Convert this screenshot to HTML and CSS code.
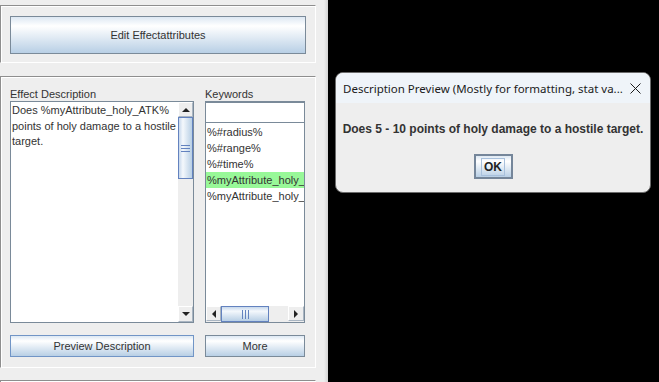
FILE: index.html
```html
<!DOCTYPE html>
<html lang="en">
<head>
  <meta charset="UTF-8">
  <meta name="viewport" content="width=device-width, initial-scale=1.0">
  <title>Effect Editor</title>
  <link rel="stylesheet" href="styles.css">
</head>
<body>
  <div class="app">
    <div class="panel panel-top">
      <button class="btn btn-wide">Edit Effectattributes</button>
    </div>

    <div class="panel panel-main">
      <div class="col col-desc">
        <div class="label">Effect Description</div>
        <div class="scroll-box desc-box">
          <div class="desc-text">Does %myAttribute_holy_ATK% points of holy damage to a hostile target.</div>
          <div class="vbar">
            <div class="arrow-btn"><span class="tri tri-up"></span></div>
            <div class="vthumb"><span class="grip-v"></span></div>
            <div class="track"></div>
            <div class="arrow-btn"><span class="tri tri-down"></span></div>
          </div>
        </div>
        <button class="btn btn-focus">Preview Description</button>
      </div>

      <div class="col col-keys">
        <div class="label">Keywords</div>
        <div class="scroll-box keys-box">
          <div class="search"></div>
          <ul class="key-list">
            <li>%#radius%</li>
            <li>%#range%</li>
            <li>%#time%</li>
            <li class="selected">%myAttribute_holy_</li>
            <li>%myAttribute_holy_</li>
          </ul>
          <div class="hbar">
            <div class="arrow-btn"><span class="tri tri-left"></span></div>
            <div class="hthumb"><span class="grip-h"></span></div>
            <div class="track"></div>
            <div class="arrow-btn"><span class="tri tri-right"></span></div>
          </div>
        </div>
        <button class="btn">More</button>
      </div>
    </div>

    <div class="panel panel-next"></div>
  </div>

  <div class="desktop">
    <div class="dialog">
      <div class="dialog-title">
        <span>Description Preview (Mostly for formatting, stat va...</span>
        <svg class="close" width="11" height="11" viewBox="0 0 11 11">
          <path d="M0.5 0.5 L10.5 10.5 M10.5 0.5 L0.5 10.5" stroke="#1b1b1b" stroke-width="1" fill="none"/>
        </svg>
      </div>
      <div class="dialog-body">
        <p>Does 5 - 10 points of holy damage to a hostile target.</p>
        <button class="ok"><span>OK</span></button>
      </div>
    </div>
  </div>
</body>
</html>
```

FILE: styles.css
```css
body {
  margin: 0;
  height: 382px;
  display: flex;
  overflow: hidden;
  background: #000;
  font-family: "Liberation Sans", Arial, sans-serif;
  font-size: 11px;
  color: #333;
}

.app {
  width: 328px;
  height: 382px;
  flex: none;
  padding-top: 5px;
  box-sizing: border-box;
  overflow: hidden;
  background: linear-gradient(to right, #eeeeee 324px, #d4d4d4 328px);
}

.panel {
  width: 316px;
  box-sizing: border-box;
  border: 1px solid;
  border-color: #8e8e8e #fff #fff #8e8e8e;
  box-shadow: inset 1px 1px 0 #fff;
}

.panel-top {
  height: 58px;
  padding: 10px 0 0 9px;
}

.panel-main {
  height: 292px;
  margin-top: 13px;
  padding: 11px 0 0 9px;
  display: flex;
  gap: 11px;
}

.panel-next {
  height: 2px;
  margin-top: 12px;
  border-bottom: none;
}

.btn {
  display: flex;
  align-items: center;
  justify-content: center;
  padding: 0;
  box-sizing: border-box;
  font: inherit;
  color: #333;
  border: 1px solid #7a8a99;
  background: linear-gradient(#dde8f3, #ffffff 25%, #b8cfe5);
}

.btn-wide {
  width: 296px;
  height: 38px;
}

.btn-focus {
  border-color: #7195c6;
}

.col {
  display: flex;
  flex-direction: column;
}

.col .btn {
  height: 22px;
  margin-top: 12px;
}

.col-desc {
  width: 184px;
}

.col-keys {
  width: 100px;
}

.label {
  height: 13px;
  line-height: 13px;
}

.scroll-box {
  height: 222px;
  box-sizing: border-box;
  border: 1px solid #7a8a99;
  background: #fff;
  display: flex;
  overflow: hidden;
}

.desc-text {
  flex: 1;
  padding: 1px 2px 0 1px;
  line-height: 15.5px;
}

/* scrollbars */
.vbar {
  width: 15px;
  display: flex;
  flex-direction: column;
  background: #eeeeee;
}

.hbar {
  height: 16px;
  display: flex;
  background: #eeeeee;
}

.arrow-btn {
  width: 15px;
  height: 15px;
  flex: none;
  box-sizing: border-box;
  display: flex;
  align-items: center;
  justify-content: center;
  background: #eeeeee;
  border: 1px solid #fff;
  border-right-color: #a9b5c2;
  border-bottom-color: #a9b5c2;
}

.vbar .arrow-btn:last-child {
  height: 16px;
}

.hbar .arrow-btn:last-child {
  width: 16px;
}

.track {
  flex: 1;
  background: #eeeeee;
}

.tri {
  width: 0;
  height: 0;
  border: 4px solid transparent;
}

.tri-up {
  border-bottom: 4px solid #222;
  border-top-width: 0;
}

.tri-down {
  border-top: 4px solid #222;
  border-bottom-width: 0;
}

.tri-left {
  border-right: 4px solid #222;
  border-left-width: 0;
}

.tri-right {
  border-left: 4px solid #222;
  border-right-width: 0;
}

.vthumb {
  height: 62px;
  flex: none;
  box-sizing: border-box;
  border: 1px solid #6382bf;
  background: linear-gradient(to right, #c7d8ec, #f4f8fc 30%, #b8cfe5);
  display: flex;
  align-items: center;
  justify-content: center;
}

.hthumb {
  width: 48px;
  flex: none;
  box-sizing: border-box;
  border: 1px solid #6382bf;
  background: linear-gradient(#c7d8ec, #f4f8fc 30%, #b8cfe5);
  display: flex;
  align-items: center;
  justify-content: center;
}

.grip-v {
  width: 9px;
  height: 1px;
  background: #6382bf;
  box-shadow: 0 3px 0 #6382bf, 0 6px 0 #6382bf;
  margin-bottom: 6px;
}

.grip-h {
  width: 1px;
  height: 9px;
  background: #6382bf;
  box-shadow: 3px 0 0 #6382bf, 6px 0 0 #6382bf;
  margin-right: 6px;
}

/* keywords list */
.keys-box {
  flex-direction: column;
  border-top-width: 2px;
}

.search {
  height: 19px;
  flex: none;
  border-bottom: 1px solid #7a8a99;
}

.key-list {
  flex: 1;
  list-style: none;
  margin: 0;
  padding: 1px 0 0 0;
  overflow: hidden;
}

.key-list li {
  height: 16px;
  line-height: 16px;
  padding-left: 1px;
  white-space: nowrap;
}

.key-list .selected {
  background: #98f898;
}

/* dialog on the desktop */
.desktop {
  flex: 1;
  padding: 72px 0 0 7px;
}

.dialog {
  width: 316px;
  height: 121px;
  box-sizing: border-box;
  border: 1px solid #6b6b6b;
  border-radius: 8px;
  overflow: hidden;
  background: #eeeeee;
  display: flex;
  flex-direction: column;
}

.dialog-title {
  height: 30px;
  flex: none;
  display: flex;
  align-items: center;
  justify-content: space-between;
  padding: 0 9px 0 7px;
  background: #eff4f9;
  font-family: "Noto Sans", "Open Sans", sans-serif;
  font-size: 11.5px;
  color: #1b1b1b;
}

.dialog-body {
  flex: 1;
  text-align: center;
  padding-top: 19px;
}

.dialog-body p {
  margin: 0;
  font-size: 12px;
  font-weight: bold;
  line-height: 14px;
}

.ok {
  margin-top: 18px;
  width: 39px;
  height: 25px;
  padding: 0;
  box-sizing: border-box;
  font: inherit;
  font-weight: bold;
  font-size: 12px;
  color: #222;
  border: 2px solid #75869a;
  background: linear-gradient(#dde8f3, #ffffff 25%, #b8cfe5);
  display: inline-flex;
  align-items: center;
  justify-content: center;
}

.ok span {
  border: 1px solid #a8c0dc;
  padding: 1px 2px;
  line-height: 14px;
}
```
